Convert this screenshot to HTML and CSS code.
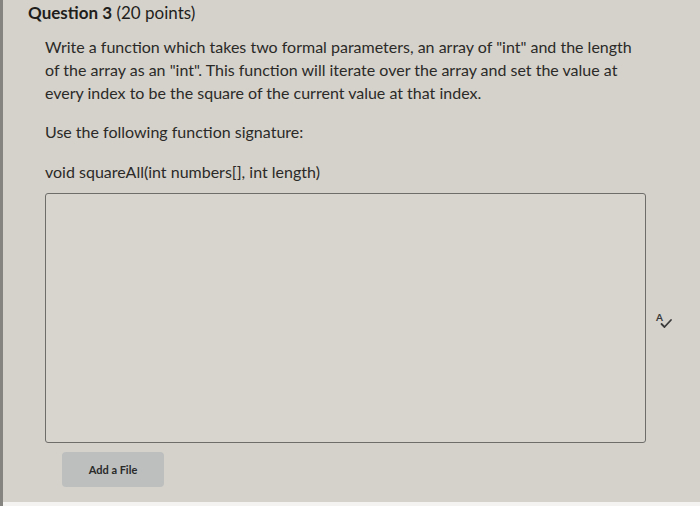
FILE: index.html
```html
<!DOCTYPE html>
<html>
<head>
<meta charset="utf-8">
<link rel="stylesheet" href="styles.css">
</head>
<body>
<div class="page">
  <div class="question">
    <h2 class="q-title"><span class="q-num">Question 3</span> (20 points)</h2>
    <div class="q-body">
      <p class="q-text">Write a function which takes two formal parameters, an array of "int" and the length of the array as an "int". This function will iterate over the array and set the value at every index to be the square of the current value at that index.</p>
      <p class="q-line q-use">Use the following function signature:</p>
      <p class="q-line q-sig">void squareAll(int numbers[], int length)</p>
      <div class="answer-row">
        <div class="answer-box"></div>
        <span class="spell" aria-label="spell check">
          <svg width="18" height="18" viewBox="0 0 18 18">
            <text x="1" y="9" font-family="Lato, sans-serif" font-weight="700" font-size="10" fill="#3a3a3a">A</text>
            <path d="M6.5 12 L9.5 15 L16 8" fill="none" stroke="#3a3a3a" stroke-width="1.8" stroke-linecap="round" stroke-linejoin="round"/>
          </svg>
        </span>
      </div>
      <button class="add-file">Add a File</button>
    </div>
  </div>
  <div class="bottom-strip"></div>
</div>
</body>
</html>
```
FILE: styles.css
```css
html, body {
  margin: 0;
  padding: 0;
  width: 700px;
  height: 506px;
  overflow: hidden;
}
body {
  background: #f2f1ee;
  font-family: Lato, "Noto Sans", sans-serif;
  color: #2b2a28;
}
.page {
  width: 700px;
  height: 506px;
  box-sizing: border-box;
  border-left: 3px solid #858481;
  background: #d5d2cb;
  display: flex;
  flex-direction: column;
}
.question {
  flex: 1;
  padding-left: 25px;
  padding-top: 2px;
}
.q-title {
  margin: 0;
  font-size: 17px;
  line-height: 22px;
  font-weight: 400;
  color: #1f1e1c;
}
.q-num {
  font-weight: 700;
}
.q-body {
  margin-left: 17px;
  padding-top: 11px;
}
.q-text {
  margin: 0;
  width: 596px;
  font-size: 16px;
  line-height: 23px;
}
.q-line {
  margin: 0;
  font-size: 16px;
  line-height: 23px;
}
.q-use {
  margin-top: 16px;
}
.q-sig {
  margin-top: 17px;
}
.answer-row {
  display: flex;
  align-items: center;
  margin-top: 10px;
}
.answer-box {
  width: 601px;
  height: 250px;
  border: 1.5px solid #6e6d6a;
  border-radius: 3px;
  box-sizing: border-box;
  background: #d8d5ce;
}
.spell {
  display: flex;
  margin-left: 9px;
  margin-top: 6px;
}
.add-file {
  display: block;
  margin-top: 9px;
  margin-left: 17px;
  width: 102px;
  height: 35px;
  border: none;
  border-radius: 4px;
  background: #bcbfbe;
  font-family: Lato, sans-serif;
  font-weight: 700;
  font-size: 11px;
  color: #2a2a2a;
  padding: 0;
}
.bottom-strip {
  height: 4px;
  background: #f4f3f1;
}
```
